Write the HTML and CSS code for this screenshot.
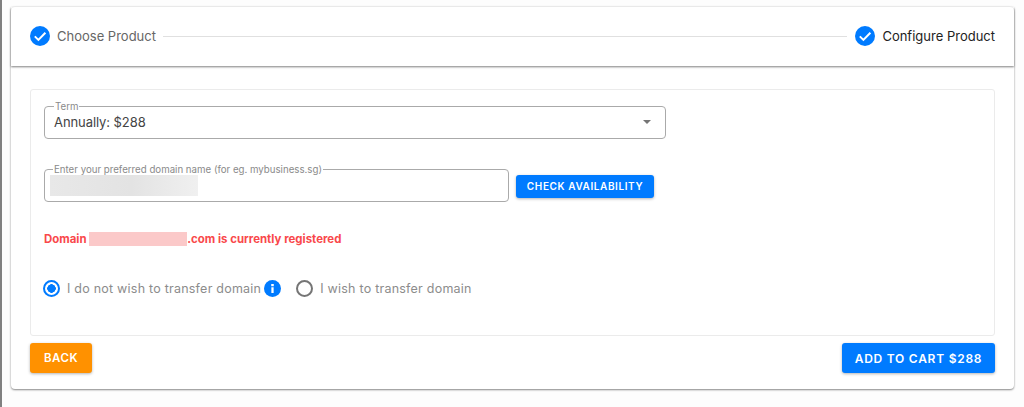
FILE: index.html
```html
<!DOCTYPE html>
<html lang="en">
<head>
    <meta charset="UTF-8">
    <title>Configure Product</title>
    <link rel="stylesheet" href="styles.css">
</head>
<body>

<div class="card">
    <div class="stepper">
        <div class="step done">
            <svg class="step-icon" viewBox="0 0 24 24"><circle cx="12" cy="12" r="10" fill="#007bff"/><path d="M6.8 12.4l3.6 3.5 7-7.2" fill="none" stroke="#fff" stroke-width="2"/></svg>
            <span>Choose Product</span>
        </div>
        <div class="step-line"></div>
        <div class="step active">
            <svg class="step-icon" viewBox="0 0 24 24"><circle cx="12" cy="12" r="10" fill="#007bff"/><path d="M6.8 12.4l3.6 3.5 7-7.2" fill="none" stroke="#fff" stroke-width="2"/></svg>
            <span>Configure Product</span>
        </div>
    </div>

    <div class="body">
        <div class="panel">
            <fieldset class="field term-field">
                <legend>Term</legend>
                <div class="select-row">
                    <span>Annually: $288</span>
                    <span class="caret"></span>
                </div>
            </fieldset>

            <div class="domain-row">
                <fieldset class="field domain-field">
                    <legend>Enter your preferred domain name (for eg. mybusiness.sg)</legend>
                    <div class="blur-input"></div>
                </fieldset>
                <button class="btn btn-small" type="button">Check Availability</button>
            </div>

            <p class="error">Domain <span class="blur-name"></span>.com is currently registered</p>

            <div class="radio-row">
                <label class="radio-item">
                    <span class="radio checked"></span>
                    <span>I do not wish to transfer domain</span>
                    <svg class="info" viewBox="0 0 24 24"><circle cx="12" cy="12" r="12" fill="#007bff"/><path d="M10.4 10.2h3.2v8.3h-3.2zM10.2 5.6h3.6v3.1h-3.6z" fill="#fff"/></svg>
                </label>
                <label class="radio-item">
                    <span class="radio"></span>
                    <span>I wish to transfer domain</span>
                </label>
            </div>
        </div>

        <div class="actions">
            <button class="btn btn-back" type="button">Back</button>
            <button class="btn btn-cart" type="button">Add to cart $288</button>
        </div>
    </div>
</div>

</body>
</html>
```

FILE: styles.css
```css
* {
    box-sizing: border-box;
}

body {
    margin: 0;
    padding: 7px 10px 0 9px;
    height: 407px;
    overflow: hidden;
    background: #fdfdfd;
    border-left: 2px solid #808080;
    font-family: Inter, "Liberation Sans", sans-serif;
}

.card {
    height: 382px;
    background: #fff;
    border-radius: 4px;
    box-shadow: 0 1px 2px rgba(0, 0, 0, 0.45), 0 0 3px rgba(0, 0, 0, 0.06);
}

.stepper {
    display: flex;
    align-items: center;
    height: 59px;
    padding: 0 19px 1px 17px;
    box-shadow: 0 1px 2px rgba(0, 0, 0, 0.5);
    position: relative;
}

.step {
    display: flex;
    align-items: center;
    gap: 5px;
    font-size: 13px;
}

.step.done {
    color: #666;
}

.step.active {
    color: #222;
}

.step-icon {
    width: 24px;
    height: 24px;
    display: block;
}

.step-line {
    flex: 1;
    height: 1px;
    margin: 0 6px 0 7px;
    background: #e0e0e0;
}

.body {
    padding: 23px 19px 0;
}

.panel {
    height: 247px;
    padding: 11px 13px 0;
    border: 1px solid #ebebeb;
    border-radius: 3px;
}

.field {
    margin: 0;
    padding: 0 9px;
    border: 1px solid #aaa;
    border-radius: 4px;
    min-width: 0;
}

.field legend {
    padding: 0 1px;
    font-size: 9.7px;
    line-height: 11px;
    color: #8a8a8a;
}

.term-field {
    width: 622px;
    height: 38px;
}

.select-row {
    display: flex;
    justify-content: space-between;
    align-items: center;
    height: 20px;
    padding-right: 5px;
    font-size: 13px;
    letter-spacing: -0.08px;
    color: #444;
}

.caret {
    width: 0;
    height: 0;
    border-left: 4px solid transparent;
    border-right: 4px solid transparent;
    border-top: 4px solid #757575;
}

.domain-row {
    display: flex;
    align-items: center;
    gap: 7px;
    margin-top: 25px;
}

.domain-field {
    width: 465px;
    height: 38px;
    padding: 0 5px;
}

.domain-field legend {
    margin-left: 3px;
}

.blur-input {
    width: 148px;
    height: 21px;
    background: linear-gradient(90deg, #e8e8e8, #e3e3e3 55%, #f0f0f0);
}

.btn {
    border: none;
    border-radius: 3px;
    color: #fff;
    font-family: Inter, "Liberation Sans", sans-serif;
    font-weight: 600;
    text-transform: uppercase;
    box-shadow: 0 1px 3px rgba(0, 0, 0, 0.3);
}

.btn-small {
    width: 138px;
    height: 23px;
    margin-top: 6px;
    padding: 0;
    background: #007bff;
    font-size: 10px;
    letter-spacing: 0.6px;
}

.error {
    margin: 30px 0 0;
    height: 14px;
    display: flex;
    align-items: center;
    font-size: 11.45px;
    font-weight: 700;
    color: #f9484b;
    white-space: pre;
}

.blur-name {
    width: 98px;
    height: 14px;
    background: #fbc9c9;
}

.radio-row {
    display: flex;
    align-items: center;
    gap: 15px;
    margin: 33px 0 0 -1px;
    font-size: 12.5px;
    letter-spacing: 0.23px;
    color: #8c8c8c;
}

.radio-item {
    display: flex;
    align-items: center;
    height: 18px;
}

.radio {
    width: 17px;
    height: 17px;
    margin-right: 7px;
    border: 2px solid #757575;
    border-radius: 50%;
}

.radio.checked {
    border-color: #007bff;
    background: radial-gradient(circle, #007bff 0, #007bff 4px, #fff 4.5px);
}

.info {
    width: 17px;
    height: 17px;
    margin-left: 3px;
}

.actions {
    display: flex;
    justify-content: space-between;
    margin-top: 7px;
}

.btn-back {
    width: 62px;
    height: 30px;
    padding: 0;
    background: #ff9100;
    font-size: 11.5px;
    letter-spacing: 0.5px;
}

.btn-cart {
    width: 153px;
    height: 30px;
    padding: 0;
    background: #007bff;
    font-size: 12px;
    letter-spacing: 0.75px;
}
```
